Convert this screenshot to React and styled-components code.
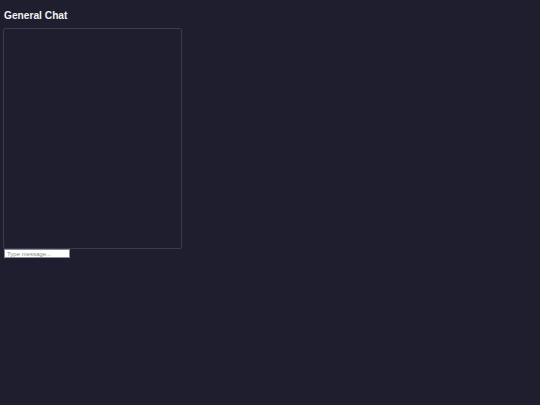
import React from 'react'
import styled, { createGlobalStyle } from 'styled-components'

const GlobalStyle = createGlobalStyle`
  html, body {
    margin: 0;
    padding: 0;
    background: #1f1e2f;
    font-family: "Liberation Sans", Arial, sans-serif;
  }
`

const Page = styled.div`
  min-height: 405px;
  padding: 3px 0 0 3px;
  box-sizing: border-box;
  background: #1f1e2f;
`

const Title = styled.h2`
  margin: 7px 0 6px 1px;
  font-size: 10.2px;
  line-height: 12px;
  font-weight: bold;
  color: #f2f2f5;
`

const Messages = styled.div`
  width: 179px;
  height: 221px;
  box-sizing: border-box;
  border: 1px solid #3b3a4e;
  border-radius: 2px;
  overflow-y: auto;
`

const MessageInput = styled.input`
  display: block;
  margin: 0 0 0 1px;
  width: 66px;
  height: 9px;
  box-sizing: border-box;
  padding: 0 2px;
  border: 1px solid #8a8a95;
  background: #ffffff;
  font-family: "Liberation Sans", Arial, sans-serif;
  font-size: 6px;
  color: #222;
  outline: none;

  &::placeholder {
    color: #8c8c8c;
  }
`

const App = () => (
  <>
    <GlobalStyle />
    <Page>
      <Title>General Chat</Title>
      <Messages />
      <MessageInput type="text" placeholder="Type message..." />
    </Page>
  </>
)

export default App
